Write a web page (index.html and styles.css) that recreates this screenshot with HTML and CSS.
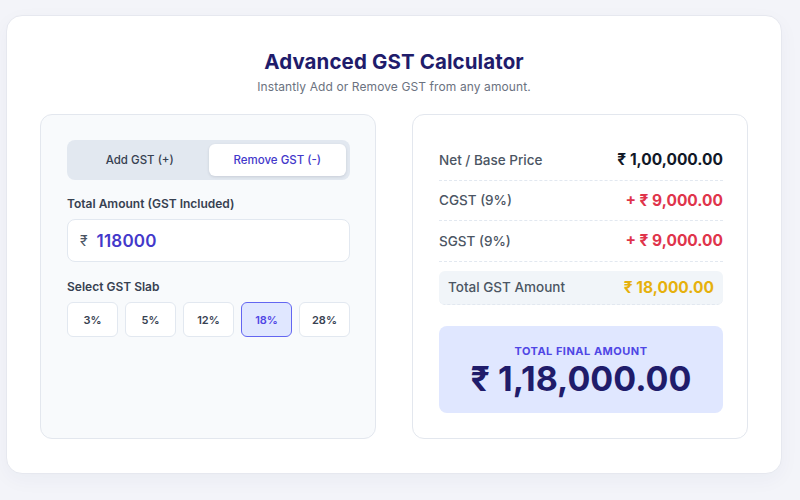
FILE: index.html
```html
<!DOCTYPE html>
<html lang="en">
<head>
<meta charset="utf-8">
<title>Advanced GST Calculator</title>
<link rel="stylesheet" href="styles.css">
</head>
<body>
<div class="card">
  <h1 class="title">Advanced GST Calculator</h1>
  <p class="subtitle">Instantly Add or Remove GST from any amount.</p>
  <div class="panels">
    <section class="panel panel-input">
      <div class="toggle">
        <button class="tab">Add GST (+)</button>
        <button class="tab tab-active">Remove GST (-)</button>
      </div>
      <label class="label">Total Amount (GST Included)</label>
      <div class="amount-input">
        <span class="rupee">₹</span>
        <span class="amount-value">118000</span>
      </div>
      <label class="label label-slab">Select GST Slab</label>
      <div class="slabs">
        <button class="slab">3%</button>
        <button class="slab">5%</button>
        <button class="slab">12%</button>
        <button class="slab slab-active">18%</button>
        <button class="slab">28%</button>
      </div>
    </section>
    <section class="panel panel-result">
      <div class="row">
        <span class="row-label">Net / Base Price</span>
        <span class="row-value">₹ 1,00,000.00</span>
      </div>
      <div class="row">
        <span class="row-label">CGST (9%)</span>
        <span class="row-value value-red">+ ₹ 9,000.00</span>
      </div>
      <div class="row">
        <span class="row-label">SGST (9%)</span>
        <span class="row-value value-red">+ ₹ 9,000.00</span>
      </div>
      <div class="row row-total">
        <span class="row-label">Total GST Amount</span>
        <span class="row-value value-gold">₹ 18,000.00</span>
      </div>
      <div class="final">
        <div class="final-label">TOTAL FINAL AMOUNT</div>
        <div class="final-value">₹ 1,18,000.00</div>
      </div>
    </section>
  </div>
</div>
</body>
</html>
```
FILE: styles.css
```css
* { box-sizing: border-box; }
html, body { margin: 0; padding: 0; }
body {
  background: #f3f4f9;
  font-family: Inter, "Noto Sans", "DejaVu Sans", sans-serif;
  width: 800px;
  height: 500px;
  overflow: hidden;
}
.card {
  margin: 15px 0 0 6px;
  width: 776px;
  height: 459px;
  background: #ffffff;
  border: 1px solid #e6e8ef;
  border-radius: 16px;
  padding: 33px 33px 34px;
  box-shadow: 0 6px 20px rgba(30, 40, 90, 0.04);
}
.title {
  margin: 0;
  text-align: center;
  font-size: 20.5px;
  line-height: 26px;
  font-weight: 700;
  color: #1f1c6b;
  letter-spacing: 0.1px;
}
.subtitle {
  margin: 5px 0 0;
  text-align: center;
  font-size: 12px;
  line-height: 14px;
  color: #6b7280;
  letter-spacing: 0.1px;
}
.panels {
  margin-top: 20px;
  display: grid;
  grid-template-columns: 336px 336px;
  column-gap: 36px;
}
.panel {
  border: 1px solid #e3e7ee;
  border-radius: 12px;
  padding: 25px 25px 25px 26px;
}
.panel-input { background: #f8fafc; }
.panel-result { background: #ffffff; }
.toggle {
  display: flex;
  background: #e2e8f0;
  border-radius: 8px;
  padding: 4px;
  height: 40px;
  width: 283px;
}
.tab {
  flex: 1;
  border: none;
  background: transparent;
  font-family: inherit;
  font-size: 11.5px;
  font-weight: 500;
  color: #374151;
  border-radius: 6px;
  padding: 0;
}
.tab-active {
  background: #ffffff;
  color: #4338ca;
  box-shadow: 0 1px 3px rgba(15, 23, 42, 0.12);
}
.label {
  display: block;
  margin-top: 17px;
  font-size: 12px;
  line-height: 14px;
  font-weight: 600;
  color: #374151;
}
.label-slab { margin-top: 18px; }
.amount-input {
  margin-top: 8px;
  width: 283px;
  height: 43px;
  background: #ffffff;
  border: 1px solid #e2e8f0;
  border-radius: 8px;
  display: flex;
  align-items: center;
  padding-left: 12px;
  gap: 9px;
}
.rupee {
  font-size: 14px;
  color: #4b5563;
}
.amount-value {
  font-size: 17px;
  font-weight: 600;
  color: #4338ca;
  letter-spacing: 0.2px;
}
.slabs {
  margin-top: 8px;
  display: flex;
  gap: 7px;
  width: 283px;
}
.slab {
  flex: 1;
  height: 35px;
  background: #ffffff;
  border: 1px solid #e2e8f0;
  border-radius: 6px;
  font-family: inherit;
  font-size: 11px;
  font-weight: 600;
  color: #374151;
  padding: 0;
}
.slab-active {
  background: #e0e7ff;
  border-color: #6366f1;
  color: #4f46e5;
}
.row {
  display: flex;
  justify-content: space-between;
  align-items: center;
  height: 40.5px;
  border-bottom: 1px dashed #e2e8f0;
  width: 284px;
}
.row-label {
  font-size: 13.5px;
  font-weight: 500;
  color: #4b5563;
}
.row-value {
  font-size: 15.5px;
  font-weight: 700;
  color: #111827;
}
.value-red { color: #e0344b; }
.value-gold { color: #e6b10d; }
.row-total {
  margin-top: 9px;
  height: 34px;
  background: #f1f5f9;
  border-radius: 6px;
  padding: 0 9px;
}
.final {
  margin-top: 21px;
  width: 284px;
  height: 87px;
  background: #e0e7ff;
  border-radius: 8px;
  display: flex;
  flex-direction: column;
  align-items: center;
  padding-top: 19px;
}
.final-label {
  font-size: 11px;
  font-weight: 700;
  letter-spacing: 0.5px;
  color: #4f46e5;
  line-height: 12px;
}
.final-value {
  margin-top: 2px;
  font-size: 34px;
  line-height: 40px;
  font-weight: 700;
  color: #1f1c6b;
  letter-spacing: 0px;
}
```
